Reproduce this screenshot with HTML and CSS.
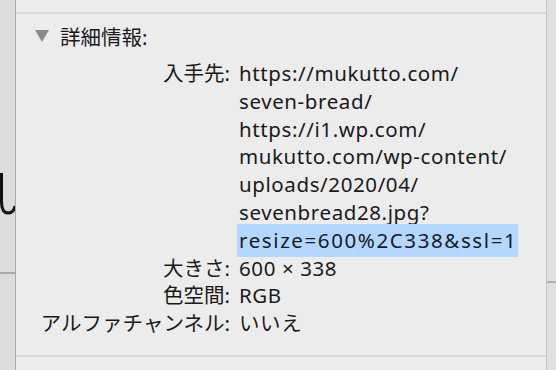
FILE: index.html
```html
<!DOCTYPE html>
<html>
<head>
  <title>情報</title>
  <link rel="stylesheet" href="styles.css">
</head>
<body>
  <div class="desk">
    <div class="strip left">
      <svg class="behind" width="15" height="60" viewBox="0 0 15 60">
        <path d="M1.5 0 V28 Q1.5 40 8 40 Q14 40 15 33" fill="none" stroke="#111" stroke-width="3"/>
      </svg>
      <div class="rule left-rule"></div>
    </div>
    <div class="panel">
      <div class="prev"></div>
      <div class="section">
        <div class="disclosure">
          <span class="tri"></span>
          <span>詳細情報:</span>
        </div>
        <div class="rows">
          <div class="label">入手先:</div>
          <div class="value">
            https://mukutto.com/<br>
            seven-bread/<br>
            https://i1.wp.com/<br>
            mukutto.com/wp-content/<br>
            uploads/2020/04/<br>
            sevenbread28.jpg?<br>
            <span class="sel">resize=600%2C338&amp;ssl=1</span>
          </div>
          <div class="label">大きさ:</div>
          <div class="value">600 × 338</div>
          <div class="label">色空間:</div>
          <div class="value">RGB</div>
          <div class="label">アルファチャンネル:</div>
          <div class="value">いいえ</div>
        </div>
      </div>
      <div class="next"></div>
    </div>
    <div class="strip right">
      <div class="rule right-rule"></div>
    </div>
  </div>
</body>
</html>
```

FILE: styles.css
```css
* {
  margin: 0;
  padding: 0;
  box-sizing: border-box;
}

body {
  width: 556px;
  height: 370px;
  overflow: hidden;
  background-color: #dadada;
  font-family: "Noto Sans", "Noto Sans CJK JP", sans-serif;
  color: #1a1a1a;
}

.desk {
  display: flex;
  height: 370px;
}

.strip {
  position: relative;
  background-color: #dcdcdc;
}

.strip.left {
  width: 16px;
  border-right: 1px solid #aaaaaa;
}

.strip.right {
  flex: 1;
  background-color: #e0e0e0;
  border-left: 1px solid #c4c4c4;
}

.behind {
  position: absolute;
  left: 0;
  top: 173px;
}

.rule {
  position: absolute;
  left: 0;
  right: 0;
  height: 2px;
  background-color: #a8a8a8;
}

.left-rule {
  top: 272px;
}

.right-rule {
  top: 281px;
  background-color: #b4b4b4;
}

.panel {
  width: 530px;
  background-color: #ececec;
  display: flex;
  flex-direction: column;
}

.prev {
  height: 14px;
  border-bottom: 2px solid #d7d7d7;
}

.section {
  padding: 10px 0 0 19px;
  height: 343px;
  border-bottom: 2px solid #d7d7d7;
}

.disclosure {
  display: flex;
  align-items: center;
  gap: 11px;
  font-size: 20.5px;
  height: 24px;
}

.tri {
  width: 0;
  height: 0;
  border-left: 7.5px solid transparent;
  border-right: 7.5px solid transparent;
  border-top: 12px solid #8b8b8b;
}

.rows {
  display: grid;
  grid-template-columns: 195px auto;
  column-gap: 9px;
  margin-top: 12px;
  font-size: 20.5px;
  line-height: 27.8px;
}

.label {
  text-align: right;
}

.value {
  letter-spacing: 0.6px;
}

.sel {
  background-color: #b3d7ff;
  padding: 2px 1px 3px 2px;
  margin-left: -2px;
  letter-spacing: 1.6px;
}
```
